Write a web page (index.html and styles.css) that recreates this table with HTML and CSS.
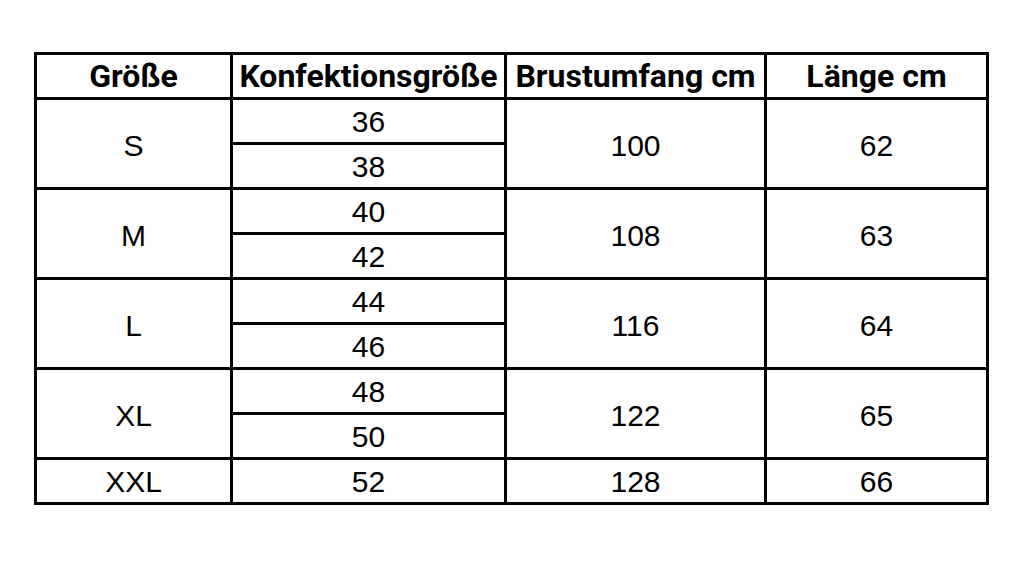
FILE: index.html
```html
<!DOCTYPE html>
<html lang="de">
<head>
<meta charset="utf-8">
<title>Größentabelle</title>
<link rel="stylesheet" href="styles.css">
</head>
<body>
<div class="size-table">
  <div class="cell head">Größe</div>
  <div class="cell head">Konfektionsgröße</div>
  <div class="cell head">Brustumfang cm</div>
  <div class="cell head">Länge cm</div>

  <div class="cell span2">S</div>
  <div class="cell sub">36</div>
  <div class="cell span2">100</div>
  <div class="cell span2">62</div>
  <div class="cell sub">38</div>

  <div class="cell span2">M</div>
  <div class="cell sub">40</div>
  <div class="cell span2">108</div>
  <div class="cell span2">63</div>
  <div class="cell sub">42</div>

  <div class="cell span2">L</div>
  <div class="cell sub">44</div>
  <div class="cell span2">116</div>
  <div class="cell span2">64</div>
  <div class="cell sub">46</div>

  <div class="cell span2">XL</div>
  <div class="cell sub">48</div>
  <div class="cell span2">122</div>
  <div class="cell span2">65</div>
  <div class="cell sub">50</div>

  <div class="cell">XXL</div>
  <div class="cell">52</div>
  <div class="cell">128</div>
  <div class="cell">66</div>
</div>
</body>
</html>
```

FILE: styles.css
```css
html, body {
  margin: 0;
  padding: 0;
  background: #ffffff;
}

body {
  padding: 52px 0 0 34px;
}

.size-table {
  display: grid;
  grid-template-columns: 193px 271px 257px 219px;
  grid-auto-rows: 42px;
  gap: 3px;
  padding: 3px;
  width: max-content;
  background: #000000;
}

.cell {
  background: #ffffff;
  display: flex;
  align-items: center;
  justify-content: center;
  font-family: "Liberation Sans", Arial, sans-serif;
  font-size: 30px;
  line-height: 1;
  color: #000000;
  padding-top: 2px;
  box-sizing: border-box;
}

.head {
  font-family: Roboto, "Liberation Sans", sans-serif;
  font-weight: 700;
  font-size: 32px;
  padding-top: 0;
}

.span2 {
  grid-row: span 2;
  padding-top: 5px;
}

.sub {
  grid-column: 2;
}
```
